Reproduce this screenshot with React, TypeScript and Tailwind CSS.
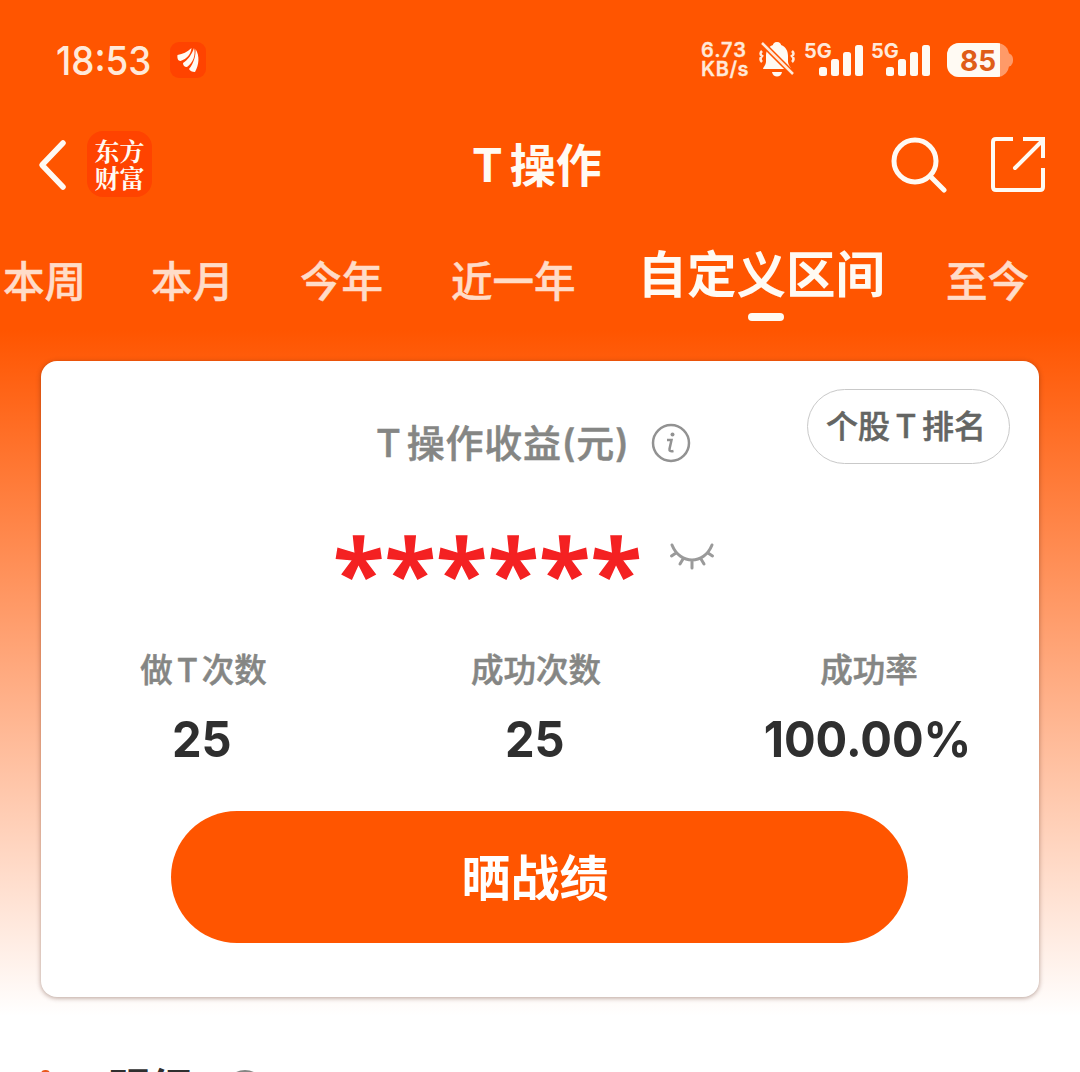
import { clsx } from "clsx";

const tabs = [
    { label: "本周", className: "ml-[3px]" },
    { label: "本月", className: "ml-[65px]" },
    { label: "今年", className: "ml-[66px]" },
    { label: "近一年", className: "ml-[68px]" },
    { label: "自定义区间", className: "ml-[62px]", active: true },
    { label: "至今", className: "ml-[61px]" },
];

const stats = [
    { before: "做", t: true, after: "次数", value: "25", className: "w-[325px]" },
    { before: "成功次数", value: "25", className: "w-[340px]" },
    { before: "成功率", value: "100.00%", className: "w-[326px]" },
];

function Signal() {
    return (
        <div className="relative h-10 w-[58px] shrink-0">
            <span className="absolute -left-px top-px text-[20px] leading-none font-bold text-[#ffe9d9]">5G</span>
            <svg className="absolute left-[14px] top-[5px]" width="45" height="32" fill="#fffaf3">
                <rect x="0" y="22" width="8" height="9" rx="2.5" />
                <rect x="12" y="14" width="8" height="17" rx="2.5" />
                <rect x="24" y="7" width="8" height="24" rx="2.5" />
                <rect x="36" y="0" width="8" height="31" rx="2.5" />
            </svg>
        </div>
    );
}

function StatusBar() {
    return (
        <div className="flex h-[120px] items-start pt-[40px]">
            <div className="ml-[56px] w-[114px] origin-left scale-x-[0.92] text-[40px] leading-[42px] font-medium text-[#ffe9d9]">18:53</div>
            <svg className="mt-[2px]" width="36" height="36" viewBox="0 0 36 36">
                <rect width="36" height="36" rx="9" fill="#ff4300" />
                <g fill="#fffaf3">
                    <path d="M7.500 13C13 12 17 10 21.500 6C21 12 17 17 10.500 19C8 19 7 16 7.500 13Z" />
                    <path d="M13 21C18 18 22 12 24 6C26 13 23 21 17 25C14 25 13 23 13 21Z" />
                    <path d="M19 27C24 21 26 13 25.500 7C30 14 29 23 25 30C22 30 20 29 19 27Z" />
                </g>
            </svg>
            <div className="ml-[495px] mt-[1px] w-[58px] text-[20px] leading-[19px] font-semibold text-[#ffe9d9] [-webkit-text-stroke:0.3px]">
                <div className="tracking-[1px]">6.73</div>
                <div className="tracking-[0.6px]">KB/s</div>
            </div>
            <svg className="-mt-px" width="36" height="42" viewBox="0 0 36 42">
                <path d="M18 3C21 3 22 5 22 6C27 8 29 12 29 17V23C29 26 32 28 32 30H4C4 28 7 26 7 23V17C7 12 9 8 14 6C14 5 15 3 18 3Z" fill="#fffaf3" />
                <path d="M13 33H23C22 39 14 39 13 33Z" fill="#fffaf3" />
                <path d="M3 12Q0 15 3 17Q0 20 3 23M33 12Q36 15 33 17Q36 20 33 23" fill="none" stroke="#ffe9d9" strokeWidth="2.500" />
                <path d="M3 4L34 35" stroke="#ff5500" strokeWidth="5.500" />
                <path d="M3 4L34 35" stroke="#ffe9d9" strokeWidth="2.500" />
            </svg>
            <div className="ml-[10px] flex gap-[9px]">
                <Signal />
                <Signal />
            </div>
            <div className="relative ml-[17px] mt-[3px] h-[34px] w-[66px]">
                <div className="absolute right-0 top-[10px] h-[14px] w-[12px] rounded-full bg-[#ff9a68]" />
                <div className="relative flex h-[34px] w-[62px] items-center overflow-hidden rounded-[12px] bg-[#ff9a68]">
                    <div className="flex h-full w-[53px] items-center bg-[#fffaf3] pt-px pl-[13px] text-[28px] leading-none font-bold text-[#df5d18]">85</div>
                </div>
            </div>
        </div>
    );
}

function TitleBar() {
    return (
        <div className="flex h-[90px] items-center">
            <svg className="ml-[36px]" width="32" height="52" viewBox="0 0 32 52" fill="none" stroke="#fffaf3" strokeWidth="5.500" strokeLinecap="round" strokeLinejoin="round">
                <path d="M27 4L6 26L27 48" />
            </svg>
            <div className="-mt-[2px] ml-[19px] flex h-[66px] w-[65px] flex-col items-center justify-center rounded-[16px] bg-[#ff4300] font-['Noto_Serif_CJK_SC','Noto_Sans_CJK_SC',serif] text-[25px] leading-[27px] font-bold text-[#fffaf3]">
                <span>东方</span>
                <span>财富</span>
            </div>
            <div className="ml-[320px] flex w-[132px] items-center text-[46px] leading-[60px] font-bold text-[#fffaf3]">
                <span className="mr-[7px]">T</span>
                <span>操作</span>
            </div>
            <svg className="-mt-[2px] ml-[287px]" width="57" height="57" viewBox="0 0 57 57" fill="none" stroke="#fffaf3" strokeWidth="5">
                <circle cx="24" cy="25" r="21" />
                <path d="M39 40L53 54" strokeLinecap="round" />
            </svg>
            <svg className="-mt-[2px] ml-[41px]" width="58" height="58" viewBox="0 0 58 58" fill="none" stroke="#fffaf3" strokeWidth="4">
                <path d="M24 4H7Q4 4 4 7V52Q4 55 7 55H51Q54 55 54 52V33" />
                <path d="M34 4H56M54 2V23" />
                <path d="M26 33L54 5" strokeLinecap="round" />
            </svg>
        </div>
    );
}

function Tabs() {
    return (
        <div className="flex h-[151px] pt-[31px] whitespace-nowrap">
            {tabs.map((tab) => (
                <div key={tab.label} className={clsx("shrink-0", tab.className)}>
                    {tab.active ? (
                        <div className="flex flex-col items-center">
                            <span className="text-[49.5px] leading-[68px] font-bold text-[#fffaf3]">{tab.label}</span>
                            <span className="mt-[4px] ml-[10px] h-[8px] w-[36px] rounded-full bg-[#fffaf3]" />
                        </div>
                    ) : (
                        <span className="block text-[41.5px] leading-[82px] font-medium text-[#ffdcc8] [-webkit-text-stroke:0.5px]">{tab.label}</span>
                    )}
                </div>
            ))}
        </div>
    );
}

function SummaryCard() {
    return (
        <div className="relative mx-[41px] flex h-[636px] flex-col rounded-[16px] bg-white shadow-[0_1px_5px_rgba(70,20,0,0.4)]">
            <div className="flex h-[164px] items-center pl-[335px] text-[38px] font-medium text-[#858684] [-webkit-text-stroke:0.5px]">
                <span className="mr-[6px]">T</span>
                <span className="w-[224px] tracking-[0.7px] whitespace-nowrap">操作收益(元)</span>
                <svg className="ml-[20px]" width="40" height="40" viewBox="0 0 40 40" fill="none" stroke="#929292" strokeWidth="2.500">
                    <circle cx="20" cy="20" r="18" />
                    <circle cx="21.500" cy="11.500" r="2" fill="#929292" stroke="none" />
                    <path d="M16 17H20.500L18.500 26Q18 29 22.500 28" />
                </svg>
            </div>
            <button className="absolute top-[28px] right-[29px] flex h-[75px] w-[203px] items-center justify-center rounded-full border border-[#c9c9c9] pt-px pr-[5px] text-[32px] font-medium text-[#646563] [-webkit-text-stroke:0.5px]">
                <span>个股</span>
                <span className="mx-[5.5px]">T</span>
                <span>排名</span>
            </button>
            <div className="flex h-[122px] pl-[292px]">
                <span className="-mt-[13px] w-[311px] font-['Open_Sans',sans-serif] text-[94px] leading-[120px] font-semibold whitespace-nowrap text-[#f42122] [-webkit-text-stroke:1.5px]">******</span>
                <svg className="ml-[25px] mt-[15px]" width="46" height="30" viewBox="0 0 46 30" fill="none" stroke="#9a9a9a" strokeWidth="3" strokeLinecap="round">
                    <path d="M3 5C11 25 35 25 43 5M7 13L2.500 16M39 13L43.500 16M14 19L11 24M23 20V28M32 19L35 24" />
                </svg>
            </div>
            <div className="flex justify-between pr-[7px]">
                {stats.map((stat) => (
                    <div key={stat.before} className={clsx("flex flex-col items-center", stat.className)}>
                        <div className="flex text-[32.5px] leading-[48px] font-medium text-[#858684] [-webkit-text-stroke:0.5px]">
                            <span>{stat.before}</span>
                            {stat.t && <span className="mx-[4px]">T</span>}
                            <span>{stat.after}</span>
                        </div>
                        <div className="mt-[14px] -ml-[3px] scale-x-[0.94] text-[50px] leading-[60px] font-bold text-[#2f2f2f]">{stat.value}</div>
                    </div>
                ))}
            </div>
            <button className="mt-[42px] ml-[130px] h-[132px] w-[737px] rounded-full bg-[#ff5500] pt-[4px] pr-[9px] text-[49px] font-bold text-white">
                晒战绩
            </button>
        </div>
    );
}

export default function App() {
    return (
        <div className="h-[1072px] w-[1080px] overflow-hidden bg-[linear-gradient(to_bottom,#ff5500_330px,#ffffff_1016px)] font-['Inter','Noto_Sans_CJK_SC',sans-serif]">
            <StatusBar />
            <TitleBar />
            <Tabs />
            <SummaryCard />
            <div className="flex h-[75px] items-start overflow-hidden pt-[73px] pl-[41px]">
                <div className="h-[40px] w-[9px] rounded-t-[4px] bg-[#e9571b]" />
                <div className="ml-[58px] -mt-[6px] text-[42px] leading-[50px] font-bold text-[#2f2f2f]">明细</div>
                <div className="ml-[33px] h-[40px] w-[40px] rounded-full border-[3px] border-[#858684]" />
            </div>
        </div>
    );
}
